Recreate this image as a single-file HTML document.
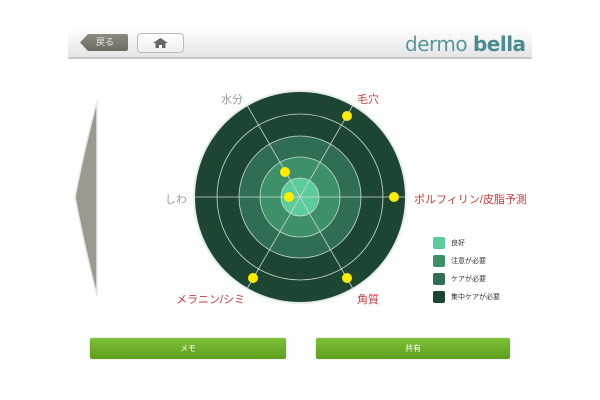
<!DOCTYPE html>
<html><head><meta charset="utf-8"><style>
body{margin:0;width:600px;height:400px;background:#fff;position:relative;overflow:hidden;font-family:"Liberation Sans","Noto Sans CJK JP",sans-serif}
.hdr{position:absolute;left:68px;top:28px;width:464px;height:29px;background:linear-gradient(#fff,#e4e5e4);border-bottom:2px solid #c9cac9}
.back{position:absolute;left:80px;top:34px;width:48px;height:17px;background:linear-gradient(#8d8a80,#6e6b62);clip-path:polygon(8px 0,100% 0,100% 100%,8px 100%,0 50%);color:#eee;font-size:9px;line-height:17px;text-indent:16px;border-radius:2px}
.home{position:absolute;left:137px;top:33px;width:45px;height:18px;border:1px solid #bbb;border-radius:4px;background:linear-gradient(#fff,#eee)}
.logo{position:absolute;left:405px;top:32px;font-size:20px;color:#5a979b;font-family:"DejaVu Sans",sans-serif;font-weight:normal;letter-spacing:-0.5px}
.btn{position:absolute;top:338px;height:21px;background:linear-gradient(#7fc03a,#5d9f1c);color:#fff;font-size:8px;text-align:center;line-height:21px;border-radius:2px;box-shadow:0 0 2px #ccc}
.lab{position:absolute;font-size:11px}
.leg{position:absolute;left:433px;font-size:7px;color:#333;line-height:12px}
.leg i{display:inline-block;width:12px;height:12px;border-radius:2px;vertical-align:middle;margin-right:6px}
</style></head><body>
<div class="hdr"></div>
<div class="back">戻る</div>
<div class="home"><svg width="45" height="18" viewBox="0 0 45 18"><path d="M15 9 L22.5 4 L30 9 Z" fill="#666"/><rect x="17.5" y="9" width="10" height="5" fill="#666"/><rect x="21" y="11" width="3" height="3" fill="#fff"/></svg></div>
<div class="logo">dermo <span style="font-weight:bold;color:#4d8a8f">bella</span></div>
<svg style="position:absolute;left:0;top:0" width="600" height="400">
<path d="M97 101 Q84 150 75 197 Q84 245 97 296 Z" fill="#9c998f" stroke="#e8e8e8" stroke-width="1.5"/>
<circle cx="300" cy="197" r="107" fill="#e6ece8"/>
<circle cx="300" cy="197" r="105" fill="#1c4532"/>
<circle cx="300" cy="197" r="61" fill="#2f6e52"/>
<circle cx="300" cy="197" r="40" fill="#3e9068"/>
<circle cx="300" cy="197" r="19" fill="#5ccc9a"/>
<g fill="none" stroke="#c9dccf" stroke-width="0.8">
<circle cx="300" cy="197" r="83"/><circle cx="300" cy="197" r="61"/><circle cx="300" cy="197" r="40"/><circle cx="300" cy="197" r="19"/>
<line x1="195" y1="197" x2="405" y2="197"/>
<line x1="247.5" y1="106" x2="352.5" y2="288"/>
<line x1="352.5" y1="106" x2="247.5" y2="288"/>
</g>
<g fill="#ffec00"><circle cx="347" cy="116" r="5"/><circle cx="394" cy="197" r="5"/><circle cx="285" cy="172" r="5"/><circle cx="289" cy="197" r="5"/><circle cx="253" cy="278" r="5"/><circle cx="347" cy="278" r="5"/></g>
</svg>
<div class="lab" style="left:221px;top:91px;color:#999">水分</div>
<div class="lab" style="left:357px;top:91px;color:#d03a3a">毛穴</div>
<div class="lab" style="left:165px;top:191px;color:#999">しわ</div>
<div class="lab" style="left:414px;top:191px;color:#d03a3a">ポルフィリン/皮脂予測</div>
<div class="lab" style="left:176px;top:291px;color:#d03a3a">メラニン/シミ</div>
<div class="lab" style="left:357px;top:291px;color:#d03a3a">角質</div>
<div class="leg" style="top:237px"><i style="background:#5ccc9a"></i>良好</div>
<div class="leg" style="top:255px"><i style="background:#3e9068"></i>注意が必要</div>
<div class="leg" style="top:273px"><i style="background:#2f6e52"></i>ケアが必要</div>
<div class="leg" style="top:291px"><i style="background:#1c4532"></i>集中ケアが必要</div>
<div class="btn" style="left:90px;width:196px">メモ</div>
<div class="btn" style="left:316px;width:194px">共有</div>
</body></html>
